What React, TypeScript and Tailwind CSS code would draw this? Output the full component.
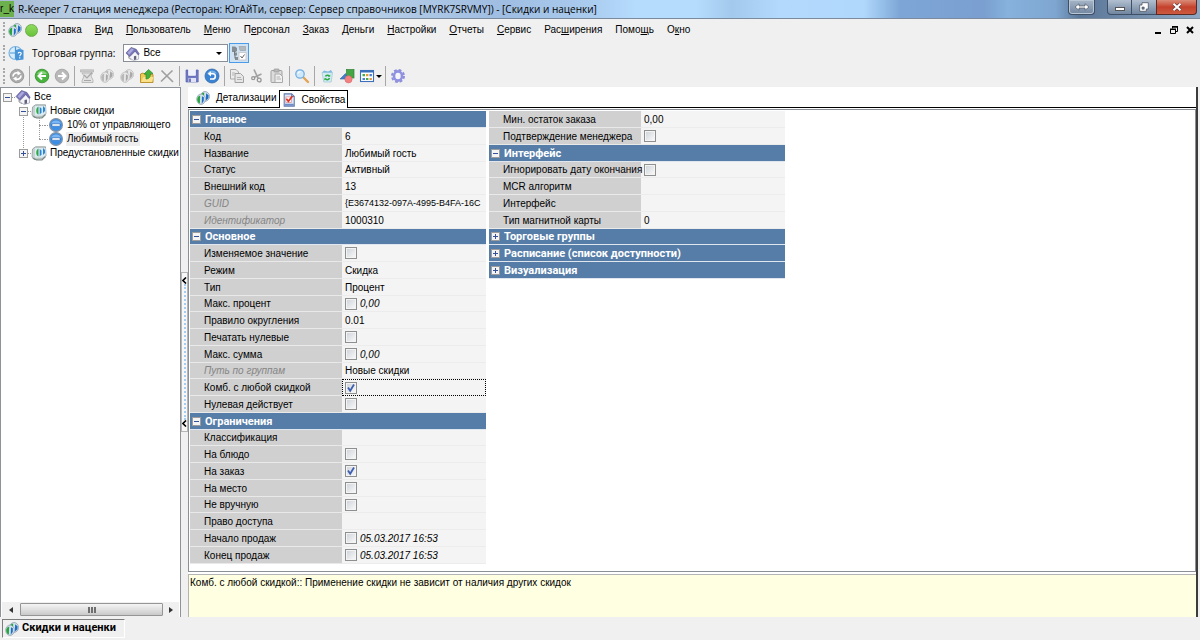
import React from "react";

type Row = {
  label: string;
  value?: string;
  check?: boolean;
  muted?: boolean;
  italic?: boolean;
  focused?: boolean;
  small?: boolean;
};

type Group = { title?: string; open?: boolean; rows: Row[] };

const leftGroups: Group[] = [
  {
    title: "Главное",
    open: true,
    rows: [
      { label: "Код", value: "6" },
      { label: "Название", value: "Любимый гость" },
      { label: "Статус", value: "Активный" },
      { label: "Внешний код", value: "13" },
      { label: "GUID", value: "{E3674132-097A-4995-B4FA-16C", muted: true, small: true },
      { label: "Идентификатор", value: "1000310", muted: true },
    ],
  },
  {
    title: "Основное",
    open: true,
    rows: [
      { label: "Изменяемое значение", check: false },
      { label: "Режим", value: "Скидка" },
      { label: "Тип", value: "Процент" },
      { label: "Макс. процент", check: false, value: "0,00", italic: true },
      { label: "Правило округления", value: "0.01" },
      { label: "Печатать нулевые", check: false },
      { label: "Макс. сумма", check: false, value: "0,00", italic: true },
      { label: "Путь по группам", value: "Новые скидки", muted: true },
      { label: "Комб. с любой скидкой", check: true, focused: true },
      { label: "Нулевая действует", check: false },
    ],
  },
  {
    title: "Ограничения",
    open: true,
    rows: [
      { label: "Классификация" },
      { label: "На блюдо", check: false },
      { label: "На заказ", check: true },
      { label: "На место", check: false },
      { label: "Не вручную", check: false },
      { label: "Право доступа" },
      { label: "Начало продаж", check: false, value: "05.03.2017 16:53", italic: true },
      { label: "Конец продаж", check: false, value: "05.03.2017 16:53", italic: true },
    ],
  },
];

const rightGroups: Group[] = [
  {
    rows: [
      { label: "Мин. остаток заказа", value: "0,00" },
      { label: "Подтверждение менеджера", check: false },
    ],
  },
  {
    title: "Интерфейс",
    open: true,
    rows: [
      { label: "Игнорировать дату окончания", check: false },
      { label: "MCR алгоритм" },
      { label: "Интерфейс" },
      { label: "Тип магнитной карты", value: "0" },
    ],
  },
  { title: "Торговые группы", rows: [] },
  { title: "Расписание (список доступности)", rows: [] },
  { title: "Визуализация", rows: [] },
];

// [text before the hotkey, hotkey, text after it]
const menu = [
  ["", "П", "равка"],
  ["", "В", "ид"],
  ["", "П", "ользователь"],
  ["", "М", "еню"],
  ["П", "е", "рсонал"],
  ["", "З", "аказ"],
  ["", "Д", "еньги"],
  ["", "Н", "астройки"],
  ["", "О", "тчеты"],
  ["", "С", "ервис"],
  ["Рас", "ш", "ирения"],
  ["Помо", "щ", "ь"],
  ["О", "к", "но"],
];

type IconProps = { className?: string };

function Svg({ children, className = "size-4" }: IconProps & { children: React.ReactNode }) {
  return (
    <svg viewBox="0 0 16 16" fill="none" className={`shrink-0 ${className}`} aria-hidden="true">
      {children}
    </svg>
  );
}

function CoinsIcon({ className, gray }: IconProps & { gray?: boolean }) {
  const green = gray ? "#b8b8b8" : "#27a53a";
  const blue = gray ? "#a9a9a9" : "#1f6cc4";
  const pale = gray ? "#e8e8e8" : "#d3e2ee";
  const rim = gray ? "#b8b8b8" : "#8496a6";
  return (
    <Svg className={className}>
      <ellipse cx="10.3" cy="6.2" rx="5.2" ry="5.6" fill={pale} stroke={rim} strokeWidth=".8" />
      <ellipse cx="5.8" cy="9.4" rx="5" ry="5.9" fill={pale} stroke={rim} strokeWidth=".8" />
      <path d="M1.4 9.8C1.4 7 3 5.2 4.8 5L4.4 14.2C2.6 13.8 1.4 12.2 1.4 9.8Z" fill={green} />
      <path d="M6.8 6L9 7.2L8.8 11.5L6.6 14.5Z" fill={blue} />
      <path d="M11.5 2.6L14.4 4.8L14.2 8.4L11.4 10.8Z" fill={blue} />
      <path d="M6.8 2.6L9.3 1.8V5.2L7.5 4Z" fill={green} />
    </Svg>
  );
}

function HouseIcon({ className }: IconProps) {
  return (
    <Svg className={className}>
      <path d="M6.5 7.5L11 5L14.5 9V14L9 15.5L4 12Z" fill="#f4f4f8" stroke="#9a9ab0" strokeWidth=".7" />
      <path d="M1 7.5L6.5 1.5L12 3.5L15.2 8.5L14 9.5L10.8 5.5L5 11.5Z" fill="#7774b8" stroke="#4f4d84" strokeWidth=".6" />
      <path d="M2.5 7.2L7 2.5L9.5 3.6L4.5 9.2Z" fill="#aaa8dc" />
      <path d="M9.5 11V15L12 14.5V10.5Z" fill="#62627c" />
      <path d="M4 10.5V13L7 14.8" stroke="#a6a6a6" />
    </Svg>
  );
}

function FolderIcon() {
  return (
    <Svg>
      <path d="M1.5 4L4.5 1.8H14.5L15 10.5L11.5 14L3 14.5L1 12Z" fill="#c7d2cf" stroke="#8b9b9b" strokeWidth=".8" />
      <path d="M4 3H14.5V10.5L11 12.5H4Z" fill="#dcebf3" />
      <path d="M7.5 3.5V11.5C4.8 11 4.2 5 7.5 3.5Z" fill="#2da845" />
      <path d="M8.7 4L10.5 5.5V9.5L8.7 11.5Z" fill="#2c86d8" />
      <path d="M12 3L14 5V8L12 10Z" fill="#2c86d8" />
      <path d="M2 13L5.5 15H11L14.5 11.5" stroke="#7b8986" strokeWidth="1.2" />
    </Svg>
  );
}

function DiscountIcon() {
  return (
    <Svg>
      <circle cx="8" cy="8" r="6.4" fill="#3c8ee6" stroke="#8494a6" strokeWidth="1.2" />
      <path d="M3 6.5C4.5 2.5 11.5 2.5 13 6.5Z" fill="#79b6f4" />
      <rect x="4" y="6.8" width="8" height="2.4" rx=".5" fill="#fff" stroke="#2b66ad" strokeWidth=".6" />
    </Svg>
  );
}

function PropsIcon() {
  return (
    <Svg className="size-[14px]">
      <path d="M2.5 1H11L14 4V15H2.5Z" fill="#dce7f7" stroke="#6079ad" strokeWidth="1.2" />
      <path d="M11 1V4H14" stroke="#6079ad" />
      <path d="M3 13.4H13.5" stroke="#6f8cc6" strokeWidth="2.2" />
      <rect x="4.5" y="4.5" width="6.5" height="6.5" fill="#fff" stroke="#d88" strokeWidth=".8" />
      <path d="M5 6.5L7.3 9.5L12 3.5" stroke="#de3426" strokeWidth="2" />
    </Svg>
  );
}

function ClockHelpIcon() {
  return (
    <Svg>
      <circle cx="7.5" cy="8" r="6.5" fill="#d8ecfa" stroke="#79b2e0" strokeWidth="1.2" />
      <path d="M7.5 2V8H2M7.5 8V14" stroke="#4a97d3" strokeWidth="1.2" />
      <path d="M8 5L11 4L15.5 5V14.5L8 15.5Z" fill="#4793d8" />
      <path d="M10.2 8.5C10.2 6.8 13.2 6.8 13.2 8.6C13.2 9.8 11.7 9.9 11.7 11.2M11.7 12.3V13.5" stroke="#fff" strokeWidth="1.2" />
    </Svg>
  );
}

function SettingsTreeIcon() {
  return (
    <Svg>
      <path d="M1 1.5H4L6 3V6L4.5 7H1ZM3 7.5H6V10.5H3ZM4 12H7V15H4Z" fill="#868d92" />
      <path d="M3.5 6V10M4 10V13.5" stroke="#777" />
      <path d="M8 1.5H14.5V5.5H9Z" fill="#b2b9bd" stroke="#9da5aa" strokeWidth=".7" />
      <rect x="8" y="7.5" width="7" height="7.5" fill="#fff" stroke="#c4c4c4" strokeWidth=".8" />
      <path d="M9.5 11L11 13L13.5 9.5" stroke="#666" />
    </Svg>
  );
}

function RefreshIcon() {
  return (
    <Svg>
      <circle cx="8" cy="8" r="6.8" fill="#ababab" stroke="#919191" strokeWidth=".8" />
      <path d="M4 8.5C4 5.5 7 4 9.5 5.2M12 7.5C12 10.5 9 12 6.5 10.8" stroke="#fff" strokeWidth="1.7" />
      <path d="M8.5 2.8L12 5.5L8.5 7.5ZM7.5 8.5V13.2L4 10.5Z" fill="#fff" />
    </Svg>
  );
}

function BackIcon() {
  return (
    <Svg>
      <circle cx="8" cy="8" r="6.8" fill="#48b43d" stroke="#3c9335" strokeWidth=".9" />
      <path d="M3 6C5 2 11 2 13 6Z" fill="#8bd47f" />
      <path d="M12 8H5M8 4.5L4.5 8L8 11.5" stroke="#fff" strokeWidth="2" />
    </Svg>
  );
}

function ForwardIcon() {
  return (
    <Svg>
      <circle cx="8" cy="8" r="6.8" fill="#b9b9b9" stroke="#a2a2a2" strokeWidth=".9" />
      <path d="M4 8H11M8 4.5L11.5 8L8 11.5" stroke="#fff" strokeWidth="2" />
    </Svg>
  );
}

function FilterIcon() {
  return (
    <Svg>
      <path d="M1.5 1.8H14.5V4H1.5Z" fill="#d0d0d0" stroke="#b0b0b0" strokeWidth=".7" />
      <path d="M3 5L5 8L3 13V14.5H14V12L12 8L13.5 5Z" fill="#e2e2e2" stroke="#b5b5b5" strokeWidth=".9" />
      <path d="M5 7L8 10L13 4.5M5 12.5H12" stroke="#a8a8a8" strokeWidth="1.2" />
    </Svg>
  );
}

function FolderUpIcon() {
  return (
    <Svg>
      <path d="M1.5 6L4 5L6 6.5H14V14.5H1.5Z" fill="#eecb55" stroke="#b58b25" strokeWidth=".9" />
      <path d="M2 14L4.5 9H14.5L13 14Z" fill="#fae18a" />
      <path d="M7 11V6H5L9.5 1.5L14 5.5H11.5C11.5 8.5 10.5 11 7 11Z" fill="#44b13b" stroke="#328a30" strokeWidth=".7" />
    </Svg>
  );
}

function DeleteIcon() {
  return (
    <Svg>
      <path d="M2.5 2.5L14 14M13.5 2.5L2 13.5" stroke="#a0a0a0" strokeWidth="1.7" />
    </Svg>
  );
}

function SaveIcon() {
  return (
    <Svg>
      <path d="M2 2H4V8H12V2H14.2V14H2Z" fill="#7178c4" stroke="#5d65b2" strokeWidth=".7" />
      <path d="M4.3 2H11.7V7.5H4.3Z" fill="#eef0fb" />
      <path d="M4.5 10H12V14H4.5Z" fill="#dfe2f4" />
      <path d="M6 10.5V14" stroke="#4d57a6" strokeWidth="1.5" />
    </Svg>
  );
}

function UndoIcon() {
  return (
    <Svg>
      <circle cx="8" cy="8" r="7" fill="#3a83d2" stroke="#3469ab" strokeWidth=".8" />
      <path d="M3 5.5C5.5 1.5 10.5 1.5 13 5.5Z" fill="#75b0e6" />
      <path d="M5.5 5.8H9C12.3 5.8 12 11 8.8 11H6" stroke="#fff" strokeWidth="1.6" />
      <path d="M7 3.2V8.4L3.7 5.8Z" fill="#fff" />
    </Svg>
  );
}

function CopyIcon() {
  return (
    <Svg>
      <path d="M1.5 1.5H7L9.5 4V11H1.5Z" fill="#ededed" stroke="#a9a9a9" />
      <path d="M6 5.5H11.5L14.5 8.5V14.5H6Z" fill="#e6e6e6" stroke="#a1a1a1" />
      <path d="M3 5H6M3 7H5M8 9.5H12M8 11.5H13" stroke="#b3b3b3" />
    </Svg>
  );
}

function CutIcon() {
  return (
    <Svg>
      <path d="M5 1.5L9 10M12.5 6L5 9.5" stroke="#a3a3a3" strokeWidth="1.7" />
      <circle cx="4.2" cy="10.2" r="1.5" stroke="#969696" strokeWidth="1.3" />
      <circle cx="10.2" cy="12" r="1.9" stroke="#969696" strokeWidth="1.3" />
    </Svg>
  );
}

function PasteIcon() {
  return (
    <Svg>
      <rect x="2" y="2.5" width="11" height="12" rx="1" fill="#dcdcdc" stroke="#a1a1a1" />
      <rect x="5" y="1" width="5" height="3" rx=".5" fill="#b9b9b9" stroke="#999" strokeWidth=".7" />
      <path d="M6 6H11L13.5 8.5V14.5H6Z" fill="#f0f0f0" stroke="#a9a9a9" />
      <path d="M7.5 9H11M7.5 11H12" stroke="#b3b3b3" />
    </Svg>
  );
}

function SearchIcon() {
  return (
    <Svg>
      <path d="M9 9L14 14" stroke="#e3a355" strokeWidth="2.4" strokeLinecap="round" />
      <circle cx="6" cy="6" r="4.2" fill="#cfe8fa" stroke="#73afe2" strokeWidth="1.3" />
      <path d="M3.8 5.5C4.3 4.2 5.5 3.7 6.6 3.8" stroke="#fff" strokeWidth="1.1" />
    </Svg>
  );
}

function RecycleIcon() {
  return (
    <Svg>
      <path d="M3 4.5H13.5L12.2 14H4.8Z" fill="#d3ecf4" stroke="#a3cbd8" strokeWidth=".8" />
      <path d="M3 4.5L5 2.5L9 3.5L12 2L13.5 4.5Z" fill="#81b9e2" />
      <path d="M6.5 8.5C7 6.8 9.5 6.8 10.2 8M10.5 10C10 12 7.2 12.2 6.3 10.7" stroke="#2eaa45" strokeWidth="1.5" />
      <path d="M9 8.8H11.2V6.6ZM7.5 10.2H5.3V12.4Z" fill="#2eaa45" />
    </Svg>
  );
}

function ShapesIcon() {
  return (
    <Svg>
      <rect x="7.5" y="1.5" width="7.5" height="8.5" fill="#43a545" stroke="#2f8134" strokeWidth=".7" />
      <path d="M1 11L6.5 5.5L8.5 11Z" fill="#417fce" stroke="#3363a8" strokeWidth=".6" />
      <circle cx="9.5" cy="11.3" r="3.6" fill="#f28282" stroke="#dc6565" strokeWidth=".6" />
    </Svg>
  );
}

function ViewIcon() {
  return (
    <Svg>
      <rect x="1.5" y="2.5" width="13" height="11" fill="#fff" stroke="#3c70bb" strokeWidth="1.1" />
      <path d="M1.5 3.5H14.5" stroke="#3c70bb" strokeWidth="2" />
      <path d="M3.5 6H6V8.3H3.5ZM7 10H9.4V12H7Z" fill="#46a849" />
      <path d="M7 6H9.4V8.3H7ZM10.5 10H12.9V12H10.5Z" fill="#e7983b" />
      <path d="M10.5 6H12.9V8.3H10.5ZM3.5 10H6V12H3.5Z" fill="#4b7fd0" />
    </Svg>
  );
}

function GearIcon() {
  return (
    <Svg>
      <circle cx="8" cy="8" r="6" stroke="#8c8fdc" strokeWidth="2" strokeDasharray="2.8 1.9" />
      <ellipse cx="8" cy="8" rx="4" ry="4.6" fill="#f6f6fa" stroke="#9092e0" strokeWidth="2.6" />
    </Svg>
  );
}

const toolbar: ([string, React.ReactNode] | null)[] = [
  ["Обновить", <RefreshIcon />],
  null,
  ["Назад", <BackIcon />],
  ["Вперед", <ForwardIcon />],
  null,
  ["Фильтр", <FilterIcon />],
  ["Создать", <CoinsIcon gray className="size-[14px]" />],
  ["Создать копию", <CoinsIcon gray className="size-[14px]" />],
  ["На уровень вверх", <FolderUpIcon />],
  ["Удалить", <DeleteIcon />],
  null,
  ["Сохранить", <SaveIcon />],
  ["Отменить", <UndoIcon />],
  null,
  ["Копировать", <CopyIcon />],
  ["Вырезать", <CutIcon />],
  ["Вставить", <PasteIcon />],
  null,
  ["Найти", <SearchIcon />],
  null,
  ["Корзина", <RecycleIcon />],
  ["Объекты", <ShapesIcon />],
];

function Grip() {
  return <div className="mx-[3px] h-4 w-0 border-l-2 border-dotted border-[#a8a8a8]" />;
}

function Separator() {
  return (
    <div className="flex w-[5px] justify-center">
      <div className="h-5 w-px bg-[#a7a7a7]" />
    </div>
  );
}

function Caret() {
  return (
    <svg viewBox="0 0 6 3" className="h-[3px] w-[6px] shrink-0" aria-hidden="true">
      <path d="M0 0H6L3 3Z" fill="#000" />
    </svg>
  );
}

function Expander({ open }: { open?: boolean }) {
  return (
    <svg viewBox="0 0 9 9" className="size-[9px] shrink-0" aria-hidden="true">
      <rect x=".5" y=".5" width="8" height="8" fill="#f4f4f4" stroke="#9c9c9c" />
      <path d={open ? "M2 4.5H7" : "M2 4.5H7M4.5 2V7"} stroke="#34509a" />
    </svg>
  );
}

function TitleBar() {
  return (
    <header className="flex h-[19px] items-start justify-between border-b border-[#7b8a9c] bg-[linear-gradient(90deg,#a7bcd4_0%,#bcd2ea_8%,#a3bfdf_18%,#b7cfe8_30%,#9fbde2_42%,#a9cbee_49%,#b5dbfd_53%,#b5dbfd_58%,#a3c9ec_61%,#b3dafd_65%,#b0d8fc_72%,#7da6d6_75%,#7a9fd0_82%,#86b2dd_84%,#7ea5cf_88%,#5a7698_90%,#8fa8c4_100%)]">
      <div className="flex items-center gap-1">
        <span className="flex h-4 w-[14px] items-center justify-center bg-[#6db14f] leading-4">r_k</span>
        <h1 className="font-['Open_Sans','Noto_Sans',sans-serif] leading-[18px] whitespace-nowrap">
          R-Keeper 7 станция менеджера (Ресторан: ЮгАйТи, сервер: Сервер справочников [MYRK7SRVMY]) - [Скидки и наценки]
        </h1>
      </div>
      <div className="mr-[3px] flex h-[15px]">
        <button aria-label="Переместить" className="mr-3 flex w-[27px] items-center justify-center rounded-b border border-t-0 border-[#3f4f66] bg-linear-to-b from-[#a7b6c8] to-[#7186a0] shadow-[inset_0_0_0_1px_#b9c6d6]">
          <svg viewBox="0 0 16 8" className="h-2 w-4 shrink-0" aria-hidden="true">
            <path d="M1 4L5 .8V3H11V.8L15 4L11 7.2V5H5V7.2Z" fill="#fff" stroke="#4b5563" strokeWidth=".7" />
          </svg>
        </button>
        <button aria-label="Свернуть" className="flex w-[25px] items-center justify-center rounded-bl border border-t-0 border-[#3f4f66] bg-linear-to-b from-[#b1bfd0] to-[#7186a0]">
          <span className="mt-1 h-1 w-[10px] border border-[#555] bg-white" />
        </button>
        <button aria-label="Развернуть" className="flex w-6 items-center justify-center border-b border-[#3f4f66] bg-linear-to-b from-[#b1bfd0] to-[#7186a0]">
          <svg viewBox="0 0 10 10" className="size-[10px]" aria-hidden="true">
            <path d="M3 .7H9.3V7H7.3V9.3H.7V3H3Z" fill="#fff" stroke="#4b5563" strokeWidth=".8" />
            <path d="M3 5H5.2V7.2H3Z" fill="#6a7d96" stroke="#4b5563" strokeWidth=".6" />
          </svg>
        </button>
        <button aria-label="Закрыть" className="flex w-[41px] items-center justify-center rounded-br border border-t-0 border-[#5a2a25] bg-linear-to-b from-[#d98b78] via-[#c4412c] to-[#cd5a40]">
          <svg viewBox="0 0 10 8" className="h-2 w-[10px]" aria-hidden="true">
            <path d="M1.5 .8L8.5 7.2M8.5 .8L1.5 7.2" stroke="#5c3a3a" strokeWidth="3.2" />
            <path d="M1.5 .8L8.5 7.2M8.5 .8L1.5 7.2" stroke="#fff" strokeWidth="2" />
          </svg>
        </button>
      </div>
    </header>
  );
}

function MenuBar() {
  return (
    <nav className="flex h-[22px] items-center">
      <Grip />
      <CoinsIcon className="size-[14px]" />
      <span className="mx-[3px] size-[13px] rounded-full border border-[#6cab4c] bg-linear-to-b from-[#8edb5c] to-[#68c23b]" />
      {menu.map(([before, key, after], i) => (
        <button key={i} className="pr-[6px] pl-[7px] leading-4">
          {before}
          <u>{key}</u>
          {after}
        </button>
      ))}
      <div className="mr-[3px] ml-auto flex items-center gap-[2px]">
        <button aria-label="Свернуть окно" className="flex size-[14px] items-center justify-center">
          <span className="mt-[6px] h-[2px] w-[6px] bg-black" />
        </button>
        <button aria-label="Восстановить окно" className="flex size-[14px] items-center justify-center">
          <svg viewBox="0 0 8 8" className="size-2" aria-hidden="true">
            <path d="M2.5 2.5V1H7.5V5.5H6M.5 3.5H5.5V7.5H.5Z" fill="none" stroke="#000" />
            <path d="M2 .8H8M0 3.3H6" stroke="#000" strokeWidth="1.5" />
          </svg>
        </button>
        <button aria-label="Закрыть окно" className="flex size-[14px] items-center justify-center">
          <svg viewBox="0 0 8 8" className="size-2" aria-hidden="true">
            <path d="M1 1L7 7M7 1L1 7" stroke="#000" strokeWidth="2" />
          </svg>
        </button>
      </div>
    </nav>
  );
}

function GroupBar() {
  return (
    <div className="flex h-6 items-center">
      <Grip />
      <ClockHelpIcon />
      <label htmlFor="trade-group" className="mx-2 font-['Open_Sans','Noto_Sans',sans-serif]">
        Торговая группа:
      </label>
      <div className="relative flex h-[18px] w-[105px] items-center">
        <select id="trade-group" className="h-full w-full appearance-none border border-[#8a8f96] bg-white pl-[19px] leading-4 outline-none">
          <option>Все</option>
        </select>
        <span className="pointer-events-none absolute inset-x-[2px] flex items-center justify-between pr-1">
          <HouseIcon className="size-[15px]" />
          <Caret />
        </span>
      </div>
      <button aria-label="Настройка групп" className="ml-px flex size-5 items-center justify-center border border-[#4a9be8] bg-[#cfe2f3]">
        <SettingsTreeIcon />
      </button>
    </div>
  );
}

function ToolBar() {
  return (
    <div className="flex h-[22px] items-center pr-1" role="toolbar">
      <Grip />
      <div className="-ml-px flex items-center">
        {toolbar.map((item, i) =>
          item ? (
            <button key={i} aria-label={item[0]} className="flex size-5 items-center justify-center">
              {item[1]}
            </button>
          ) : (
            <Separator key={i} />
          )
        )}
        <button aria-label="Вид списка" className="flex h-5 w-[26px] items-center justify-center gap-px">
          <ViewIcon />
          <Caret />
        </button>
        <Separator />
        <button aria-label="Параметры" className="flex size-5 items-center justify-center">
          <GearIcon />
        </button>
      </div>
    </div>
  );
}

function TreeRow({ icon, text, open, leaf, selected }: { icon: React.ReactNode; text: string; open?: boolean; leaf?: boolean; selected?: boolean }) {
  return (
    <div className="flex h-[14px] items-center whitespace-nowrap">
      {leaf ? (
        <span className="ml-1 w-[6px] shrink-0 border-t border-dotted border-[#9a9a9a]" />
      ) : (
        <button aria-label={text} className="relative z-10 shrink-0">
          <Expander open={open} />
        </button>
      )}
      <span className="w-[3px] shrink-0 border-t border-dotted border-[#9a9a9a]" />
      {icon}
      <span className={`ml-[2px] px-px leading-[14px] ${selected ? "bg-[#eeeeee]" : ""}`}>{text}</span>
    </div>
  );
}

function Tree() {
  return (
    <aside className="flex w-[181px] shrink-0 flex-col border border-b-0 border-[#8e9299] bg-white">
      <div className="flex-1 overflow-hidden pt-[2px] pl-[2px]">
        <TreeRow icon={<HouseIcon />} text="Все" open />
        <ul className="ml-4">
          <li className="relative">
            <span className="absolute top-2 left-1 h-10 border-l border-dotted border-[#9a9a9a]" />
            <TreeRow icon={<FolderIcon />} text="Новые скидки" open />
            <ul className="ml-4">
              <li className="relative">
                <span className="absolute top-0 left-1 h-[21px] border-l border-dotted border-[#9a9a9a]" />
                <TreeRow icon={<DiscountIcon />} text="10% от управляющего" leaf />
              </li>
              <li>
                <TreeRow icon={<DiscountIcon />} text="Любимый гость" leaf selected />
              </li>
            </ul>
          </li>
          <li>
            <TreeRow icon={<FolderIcon />} text="Предустановленные скидки" />
          </li>
        </ul>
      </div>
      <div className="mx-px flex h-[15px] items-center bg-[#f0f0f0]">
        <button aria-label="Прокрутить влево" className="flex w-[18px] justify-center">
          <svg viewBox="0 0 4 6" className="h-[6px] w-1" aria-hidden="true">
            <path d="M4 0V6L0 3Z" fill="#333" />
          </svg>
        </button>
        <div className="flex h-[13px] w-[143px] items-center justify-center gap-px rounded-[1px] border border-[#959595] bg-linear-to-b from-[#f4f4f4] via-[#e0e0e0] to-[#c9c9c9]">
          <span className="h-[6px] w-[2px] bg-[#6e6e6e]" />
          <span className="h-[6px] w-[2px] bg-[#6e6e6e]" />
          <span className="h-[6px] w-[2px] bg-[#6e6e6e]" />
        </div>
        <button aria-label="Прокрутить вправо" className="flex flex-1 justify-center">
          <svg viewBox="0 0 4 6" className="h-[6px] w-1" aria-hidden="true">
            <path d="M0 0V6L4 3Z" fill="#333" />
          </svg>
        </button>
      </div>
    </aside>
  );
}

function Splitter() {
  const arrow = (
    <svg viewBox="0 0 5 7" className="h-[7px] w-[5px]" aria-hidden="true">
      <path d="M4 .5L1 3.5L4 6.5" fill="none" stroke="#000" strokeWidth="1.6" />
    </svg>
  );
  return (
    <div className="flex w-[7px] shrink-0 flex-col justify-center">
      <button aria-label="Скрыть дерево" className="flex h-40 flex-col items-center justify-between border border-[#b5b5b5] bg-[#f7f7f7] py-1">
        {arrow}
        <span className="w-0 flex-1 border-l-2 border-dotted border-[#a5cdf2]" />
        {arrow}
      </button>
    </div>
  );
}

function CheckBox({ id, checked }: { id: string; checked: boolean }) {
  return (
    <span className="relative flex size-3 shrink-0">
      <input
        id={id}
        type="checkbox"
        defaultChecked={checked}
        className="peer size-3 appearance-none border border-[#8e8f8f] bg-linear-to-br from-[#cdd2d8] to-[#fbfbfb] shadow-[inset_0_0_0_1px_#f4f4f4]"
      />
      <svg viewBox="0 0 12 12" className="pointer-events-none absolute inset-0 hidden size-3 peer-checked:block" aria-hidden="true">
        <path d="M3 5.5L5.2 8.8L9 2.5" fill="none" stroke="#3f5fb0" strokeWidth="1.8" />
      </svg>
    </span>
  );
}

function PropertyTable({ groups, name }: { groups: Group[]; name: string }) {
  return (
    <table className="w-[296px] table-fixed border-separate border-spacing-0 text-left leading-[15px]">
      <colgroup>
        <col className="w-[152px]" />
        <col />
      </colgroup>
      <tbody className="[&>tr]:h-[17px] [&>tr:nth-child(4n)]:h-4">
        {groups.map((group, g) => (
          <React.Fragment key={g}>
            {group.title && (
              <tr>
                <th colSpan={2} className="border-b border-[#dfe6ee] bg-[#567da8] p-0 text-white">
                  <button className="flex items-center gap-1 pl-[2px] font-['Roboto',sans-serif] text-[11px] font-bold">
                    <Expander open={group.open} />
                    {group.title}
                  </button>
                </th>
              </tr>
            )}
            {group.rows.map((row, r) => {
              const id = `${name}-${g}-${r}`;
              return (
                <tr key={r}>
                  <th
                    scope="row"
                    className={`border-b border-[#e9e9e9] bg-[#d0d0d0] p-0 pl-[14px] font-normal whitespace-nowrap ${
                      row.muted ? "text-[#858585] italic" : ""
                    }`}
                  >
                    {row.check === undefined ? row.label : <label htmlFor={id}>{row.label}</label>}
                  </th>
                  <td
                    className={`bg-[#f4f4f4] p-0 whitespace-nowrap ${
                      row.focused ? "border border-dotted border-black pl-[2px]" : "border-b border-[#ececec] pl-[3px]"
                    } ${row.italic ? "italic" : ""} ${row.small ? "text-[9px]" : ""}`}
                  >
                    <div className="flex items-center gap-[3px]">
                      {row.check !== undefined && <CheckBox id={id} checked={row.check} />}
                      {row.value}
                    </div>
                  </td>
                </tr>
              );
            })}
          </React.Fragment>
        ))}
      </tbody>
    </table>
  );
}

function Workspace() {
  return (
    <main className="mr-[2px] flex min-w-0 flex-1 flex-col">
      <div className="flex flex-1 flex-col border-r-2 border-[#3c3c3c] bg-white">
        <div className="flex h-[21px] items-end border-b border-black pt-[2px]" role="tablist">
          <button role="tab" className="flex h-[18px] items-center gap-[6px] pr-[2px] pl-2 leading-4">
            <CoinsIcon className="size-[14px]" />
            Детализации
          </button>
          <button role="tab" aria-selected="true" className="-mb-px flex h-[18px] items-center gap-[6px] border border-b-0 border-black bg-white px-[2px] leading-4">
            <PropsIcon />
            Свойства
          </button>
        </div>
        <section className="mt-px flex flex-1 items-start gap-[3px] border border-[#8b8f96] pt-px pl-px">
          <PropertyTable groups={leftGroups} name="left" />
          <PropertyTable groups={rightGroups} name="right" />
        </section>
        <p className="mt-[2px] h-[43px] border-t border-l border-[#b4b4b4] bg-[#ffffe1] px-px leading-[15px]">
          Комб. с любой скидкой:: Применение скидки не зависит от наличия других скидок
        </p>
      </div>
    </main>
  );
}

export default function App() {
  return (
    <div className="flex min-h-screen flex-col bg-[#f0f0f0] font-['Liberation_Sans',Arial,sans-serif] text-[10px] text-black">
      <TitleBar />
      <MenuBar />
      <GroupBar />
      <ToolBar />
      <div className="flex flex-1">
        <Tree />
        <Splitter />
        <Workspace />
      </div>
      <footer className="flex h-[23px] items-center pl-[2px]">
        <button className="flex h-[19px] w-[123px] items-center gap-[3px] border border-t-[#7d7d7d] border-r-white border-b-white border-l-[#7d7d7d] pl-[2px] font-['Roboto',sans-serif] text-[11px] font-bold whitespace-nowrap">
          <CoinsIcon className="size-[14px]" />
          Скидки и наценки
        </button>
      </footer>
    </div>
  );
}
